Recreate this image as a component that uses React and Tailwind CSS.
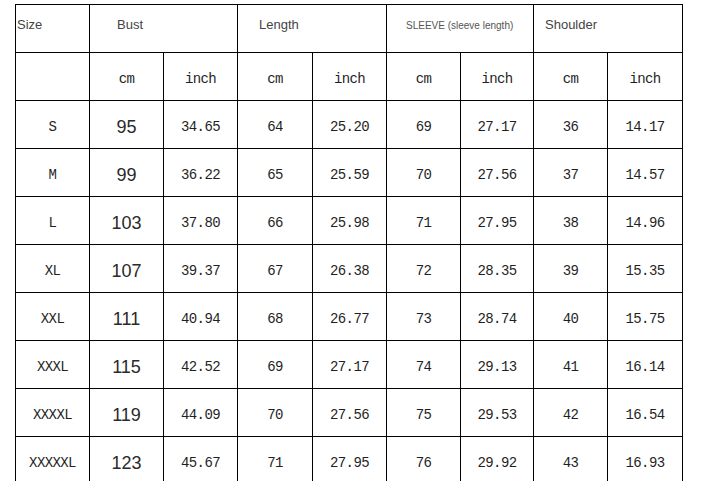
const rows = [
  ['S', '95', '34.65', '64', '25.20', '69', '27.17', '36', '14.17'],
  ['M', '99', '36.22', '65', '25.59', '70', '27.56', '37', '14.57'],
  ['L', '103', '37.80', '66', '25.98', '71', '27.95', '38', '14.96'],
  ['XL', '107', '39.37', '67', '26.38', '72', '28.35', '39', '15.35'],
  ['XXL', '111', '40.94', '68', '26.77', '73', '28.74', '40', '15.75'],
  ['XXXL', '115', '42.52', '69', '27.17', '74', '29.13', '41', '16.14'],
  ['XXXXL', '119', '44.09', '70', '27.56', '75', '29.53', '42', '16.54'],
  ['XXXXXL', '123', '45.67', '71', '27.95', '76', '29.92', '43', '16.93'],
];

const sans = "font-['Liberation_Sans',Arial,sans-serif]";
const mono = "font-['Liberation_Mono','Courier_New',monospace] text-[14px] tracking-[-0.6px] text-[#1f1f1f]";

function Cell({ children, className = '' }) {
  return (
    <div className={`h-[48px] border-r border-b border-black flex items-center justify-center pt-[5px] ${className}`}>
      {children}
    </div>
  );
}

export default function App() {
  return (
    <div className="w-[701px] h-[481px] bg-white overflow-hidden pl-[15px] pt-[4px]">
      <div className="grid grid-cols-[74px_74px_74px_75px_74px_74px_73px_74px_75px] w-fit border-l border-t border-black">
        {/* header */}
        <div className={`h-[48px] border-r border-b border-black flex items-center pb-[7px] pl-[1px] text-[13px] text-[#444] ${sans}`}>
          Size
        </div>
        <div className={`col-span-2 h-[48px] border-r border-b border-black flex items-center pb-[7px] pl-[27px] text-[13px] text-[#444] ${sans}`}>
          Bust
        </div>
        <div className={`col-span-2 h-[48px] border-r border-b border-black flex items-center pb-[7px] pl-[21px] text-[13px] text-[#444] ${sans}`}>
          Length
        </div>
        <div className={`col-span-2 h-[48px] border-r border-b border-black flex items-center pb-[7px] pl-[19px] text-[10px] text-[#555] ${sans}`}>
          SLEEVE (sleeve length)
        </div>
        <div className={`col-span-2 h-[48px] border-r border-b border-black flex items-center pb-[7px] pl-[11px] text-[13px] text-[#444] ${sans}`}>
          Shoulder
        </div>

        {/* units */}
        <Cell />
        {['cm', 'inch', 'cm', 'inch', 'cm', 'inch', 'cm', 'inch'].map((u, i) => (
          <Cell key={i} className={mono}>{u}</Cell>
        ))}

        {/* data */}
        {rows.map((r) =>
          r.map((v, i) => (
            <Cell
              key={r[0] + i}
              className={i === 1 ? `${sans} text-[18px] text-[#2a2a2a]` : mono}
            >
              {v}
            </Cell>
          ))
        )}
      </div>
    </div>
  );
}
